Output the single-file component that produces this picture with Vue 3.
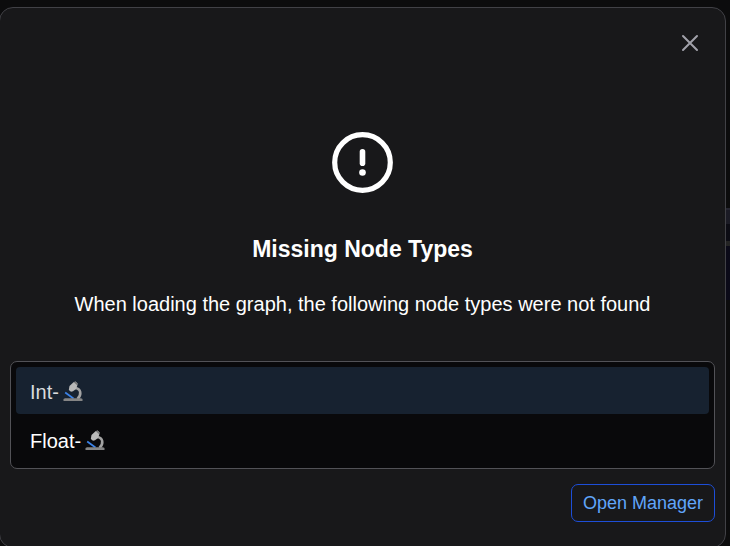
<script setup>
import { ref } from 'vue'

const nodeTypes = ['Int-', 'Float-']
const selected = ref(0)
</script>

<template>
  <div class="backdrop">
    <div class="canvas-strip" aria-hidden="true"></div>
    <section class="dialog" role="dialog" aria-labelledby="dialog-title">
      <header class="dialog-header">
        <button class="close" type="button" aria-label="Close">
          <svg width="18" height="18" viewBox="0 0 18 18" fill="none">
            <path d="M2 2L16 16M16 2L2 16" stroke="currentColor" stroke-width="2" stroke-linecap="round" />
          </svg>
        </button>
      </header>

      <div class="message">
        <svg class="alert" width="61" height="61" viewBox="0 0 61 61" fill="none" aria-hidden="true">
          <circle cx="30.5" cy="30.5" r="27.8" stroke="#fff" stroke-width="5.2" />
          <path d="M30.5 19.8V31.2" stroke="#fff" stroke-width="5.6" stroke-linecap="round" />
          <circle cx="30.5" cy="40.5" r="3.3" fill="#fff" />
        </svg>
        <h1 id="dialog-title">Missing Node Types</h1>
        <p>When loading the graph, the following node types were not found</p>
      </div>

      <ul class="listbox" role="listbox" aria-label="Missing node types">
        <li
          v-for="(name, i) in nodeTypes"
          :key="name"
          class="option"
          :class="{ active: selected === i }"
          role="option"
          :aria-selected="selected === i"
          @click="selected = i"
        >
          <span>{{ name }}</span>
          <svg class="microscope" width="20" height="21" viewBox="0 0 20 21" fill="none" aria-hidden="true">
            <path d="M12 7C18 7.500 19 13.500 14.500 18" stroke="#a3a3a3" stroke-width="2.600" />
            <path d="M2.200 11.500L10.500 17.500" stroke="#3b82e8" stroke-width="1.700" />
            <path d="M10.500 1.200L12.500 0.600L14.500 2.200L14.200 4.800L13 8L10 10.300L8 10.800L5.800 9L6.500 5Z" fill="#b9b9b9" />
            <path d="M10.800 1.200L12.500 0.600L14.500 2.200L14.200 4.200Z" fill="#777" />
            <path d="M0.500 18L2 17.200H18L19.500 18V20H0.500Z" fill="#858585" />
          </svg>
        </li>
      </ul>

      <footer class="actions">
        <button class="manager" type="button">Open Manager</button>
      </footer>
    </section>
  </div>
</template>

<style>
body {
  margin: 0;
  background: #0c0c0d;
}
</style>

<style scoped>
.backdrop {
  position: relative;
  box-sizing: border-box;
  height: 100vh;
  padding: 7px 4px 0 0;
  overflow: hidden;
  font-family: "Liberation Sans", Arial, sans-serif;
  color: #fff;
}

.canvas-strip {
  position: absolute;
  top: 208px;
  right: 0;
  width: 6px;
  height: 92px;
  background: linear-gradient(#252530 0 2px, #1b1b25 2px 16px, #0c0c14 16px 33px, #242424 33px 38px, #0b0a18 38px);
}

.dialog {
  position: relative;
  box-sizing: border-box;
  margin-left: -1px;
  padding: 10px 10px 25px;
  border: 1px solid #414146;
  border-radius: 14px;
  background: #18181a;
}

.dialog-header {
  display: flex;
  justify-content: flex-end;
  padding: 5px 5px 0 0;
}

.close {
  display: grid;
  place-items: center;
  width: 40px;
  height: 40px;
  padding: 0;
  border: 0;
  border-radius: 50%;
  background: transparent;
  color: #a1a1aa;
}

.message {
  display: flex;
  flex-direction: column;
  align-items: center;
  padding: 69px 0 42px;
  text-align: center;
}

.message h1 {
  margin: 40px 0 0;
  font-size: 23px;
  line-height: 32px;
}

.message p {
  margin: 24px 0 0;
  font-size: 20px;
  line-height: 30px;
}

.listbox {
  display: flex;
  flex-direction: column;
  gap: 2px;
  margin: 0;
  padding: 5px;
  border: 1px solid #525257;
  border-radius: 7px;
  background: #09090b;
  list-style: none;
}

.option {
  display: flex;
  align-items: center;
  gap: 4px;
  box-sizing: border-box;
  height: 47px;
  padding: 2px 14px 0;
  border-radius: 4px;
  font-size: 20px;
  line-height: 28px;
}

.option.active {
  background: #172230;
  color: #d9dade;
}

.microscope {
  flex: none;
}

.actions {
  display: flex;
  justify-content: flex-end;
  padding-top: 15px;
}

.manager {
  box-sizing: border-box;
  height: 38px;
  padding: 0 11px;
  border: 1px solid #1d4ed8;
  border-radius: 7px;
  background: transparent;
  color: #60a5fa;
  font: 18px "Liberation Sans", Arial, sans-serif;
}
</style>
